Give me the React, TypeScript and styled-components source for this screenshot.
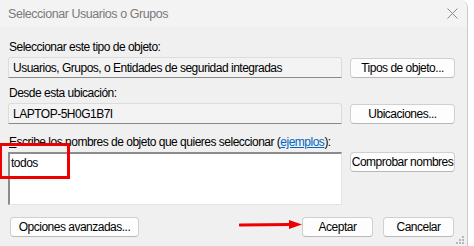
import styled, { createGlobalStyle } from "styled-components";

const GlobalStyle = createGlobalStyle`
  html, body {
    margin: 0;
    padding: 0;
    background: #ffffff;
  }
  body {
    font-family: "Liberation Sans", Arial, sans-serif;
    font-size: 12px;
    letter-spacing: -0.5px;
    color: #000;
  }
`;

// Window frame
const Window = styled.div`
  position: relative;
  width: 467px;
  height: 246px;
  background: #f0f0f0;
  border-right: 1px solid #c9c9c9;
  border-top-right-radius: 8px;
  overflow: hidden;
  display: flex;
  flex-direction: column;
`;

const TitleBar = styled.div`
  height: 27px;
  flex-shrink: 0;
  display: flex;
  align-items: center;
  justify-content: space-between;
  padding: 0 9px 0 8px;
  background: #f3f3f3;
`;

const Title = styled.span`
  font-size: 12.5px;
  letter-spacing: -0.45px;
  color: #7a7a7a;
`;

const CloseIcon = styled.svg`
  width: 11px;
  height: 11px;
`;

const Body = styled.div`
  padding: 12px 13px 0 8px;
  display: flex;
  flex-direction: column;
`;

// Types for Styled Props
interface GapProps {
  $top?: number;
}

const Label = styled.div<GapProps>`
  line-height: 16px;
  margin-top: ${(p) => p.$top ?? 0}px;
  margin-bottom: 2px;
  padding-left: 1px;
  white-space: nowrap;
`;

const Row = styled.div<{ $align?: string }>`
  display: grid;
  grid-template-columns: 334px 105px;
  column-gap: 8px;
  align-items: ${(p) => p.$align ?? "center"};
`;

const Field = styled.div`
  height: 21px;
  box-sizing: border-box;
  background: #f3f3f3;
  border: 1px solid #dcdcdc;
  border-bottom-color: #8a8a8a;
  border-radius: 3px 3px 0 0;
  padding: 0 4px;
  display: flex;
  align-items: center;
  white-space: nowrap;
`;

const NamesBox = styled.div`
  height: 53px;
  box-sizing: border-box;
  background: #ffffff;
  border: 1px solid #e3e3e3;
  border-top: 2px solid #8c8c8c;
  border-left: 2px solid #8c8c8c;
  padding: 1px 1px;
  line-height: 16px;
`;

const Button = styled.button<{ $width?: number }>`
  box-sizing: border-box;
  width: ${(p) => (p.$width ? `${p.$width}px` : "105px")};
  height: 20px;
  padding: 0;
  background: #fdfdfd;
  border: 1px solid #d0d0d0;
  border-bottom-color: #b8b8b8;
  border-radius: 4px;
  font-family: inherit;
  font-size: 12px;
  letter-spacing: -0.5px;
  color: #000;
  white-space: nowrap;
`;

const Footer = styled.div`
  display: flex;
  align-items: center;
  margin-top: 12px;
  padding-left: 2px;
`;

const FooterRight = styled.div`
  margin-left: auto;
  display: flex;
  gap: 10px;
`;

const Link = styled.a`
  color: #0067c0;
  text-decoration: underline;
`;

const Accel = styled.span`
  text-decoration: underline;
`;

// Annotations drawn over the dialog
const Highlight = styled.div`
  position: absolute;
  left: 0;
  top: 143px;
  width: 70px;
  height: 36px;
  box-sizing: border-box;
  border: 3px solid #ee0000;
  border-left-width: 2px;
`;

const Arrow = styled.svg`
  position: absolute;
  left: 239px;
  top: 219px;
  width: 64px;
  height: 12px;
`;

const Grip = styled.svg`
  position: absolute;
  right: 2px;
  bottom: 1px;
  width: 10px;
  height: 10px;
`;

export default function App() {
  return (
    <>
      <GlobalStyle />
      <Window>
        <TitleBar>
          <Title>Seleccionar Usuarios o Grupos</Title>
          <CloseIcon viewBox="0 0 11 11">
            <path d="M0.5 0.5 L10.5 10.5 M10.5 0.5 L0.5 10.5" stroke="#8a8a8a" strokeWidth="1" />
          </CloseIcon>
        </TitleBar>
        <Body>
          <Label>Seleccionar este tipo de objeto:</Label>
          <Row>
            <Field>Usuarios, Grupos, o Entidades de seguridad integradas</Field>
            <Button>Tipos de objeto...</Button>
          </Row>

          <Label $top={7}>Desde esta ubicación:</Label>
          <Row>
            <Field>LAPTOP-5H0G1B7I</Field>
            <Button>Ubicaciones...</Button>
          </Row>

          <Label $top={10}>
            <Accel>E</Accel>scribe los nombres de objeto que quieres seleccionar (
            <Link>ejemplos</Link>):
          </Label>
          <Row $align="start">
            <NamesBox>todos</NamesBox>
            <Button>Comprobar nombres</Button>
          </Row>

          <Footer>
            <Button $width={129}>Opciones avanzadas...</Button>
            <FooterRight>
              <Button $width={71}>Aceptar</Button>
              <Button $width={71}>Cancelar</Button>
            </FooterRight>
          </Footer>
        </Body>

        <Highlight />
        <Arrow viewBox="0 0 64 12">
          <path d="M1 6 L52 5.5" stroke="#ee0000" strokeWidth="3" strokeLinecap="round" />
          <path d="M50 1 L63 5.5 L50 10 Z" fill="#ee0000" />
        </Arrow>
        <Grip viewBox="0 0 10 10">
          <g fill="#b8b8b8">
            <rect x="7" y="1" width="2" height="2" />
            <rect x="4" y="4" width="2" height="2" />
            <rect x="7" y="4" width="2" height="2" />
            <rect x="1" y="7" width="2" height="2" />
            <rect x="4" y="7" width="2" height="2" />
            <rect x="7" y="7" width="2" height="2" />
          </g>
        </Grip>
      </Window>
    </>
  );
}
